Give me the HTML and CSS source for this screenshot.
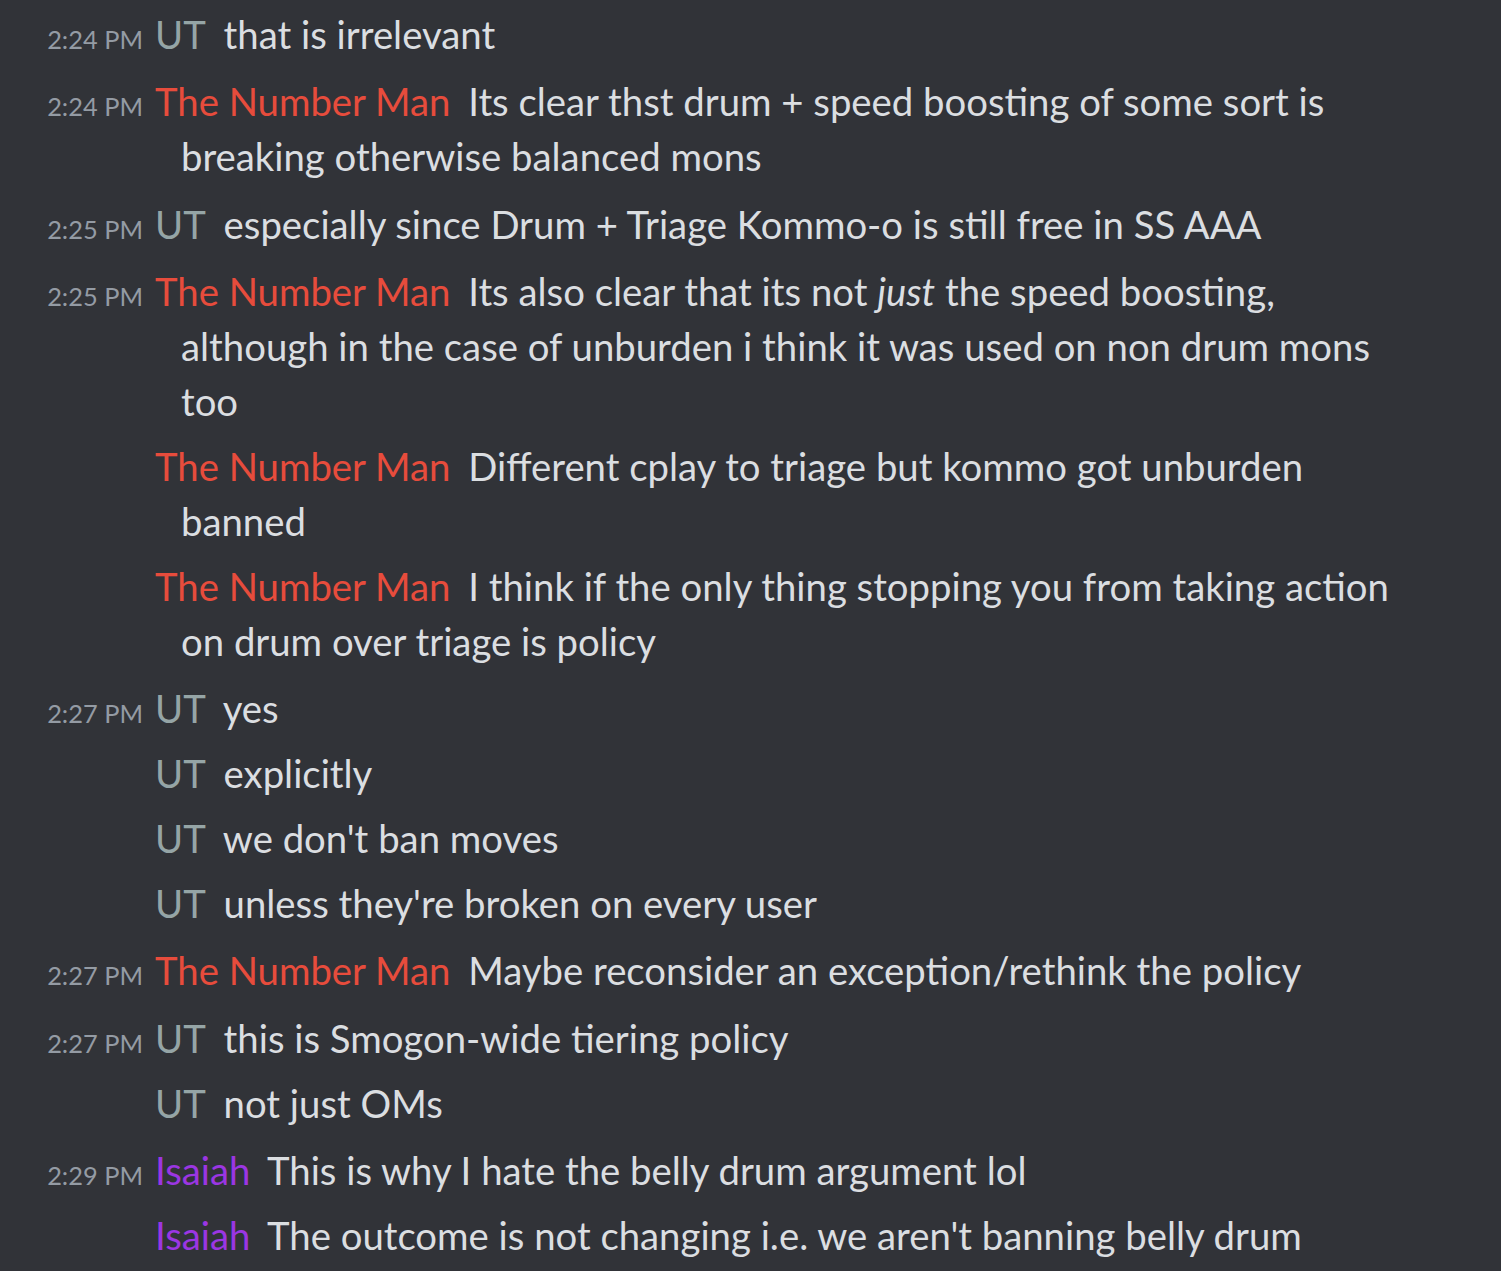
FILE: index.html
```html
<!DOCTYPE html>
<html lang="en">
<head>
<meta charset="utf-8">
<title>Chat</title>
<link rel="stylesheet" href="styles.css">
</head>
<body>
<main class="chat">
  <div class="msg start"><span class="ts">2:24 PM</span><span class="name ut">UT</span> that is irrelevant</div>
  <div class="msg start"><span class="ts">2:24 PM</span><span class="name tnm">The Number Man</span> Its clear thst drum + speed boosting of some sort is breaking otherwise balanced mons</div>
  <div class="msg start"><span class="ts">2:25 PM</span><span class="name ut">UT</span> especially since Drum + Triage Kommo-o is still free in SS AAA</div>
  <div class="msg start"><span class="ts">2:25 PM</span><span class="name tnm">The Number Man</span> Its also clear that its not <em>just</em> the speed boosting, although in the case of unburden i think it was used on non drum mons too</div>
  <div class="msg"><span class="ts"></span><span class="name tnm">The Number Man</span> Different cplay to triage but kommo got unburden banned</div>
  <div class="msg"><span class="ts"></span><span class="name tnm">The Number Man</span> I think if the only thing stopping you from taking action on drum over triage is policy</div>
  <div class="msg start"><span class="ts">2:27 PM</span><span class="name ut">UT</span> yes</div>
  <div class="msg"><span class="ts"></span><span class="name ut">UT</span> explicitly</div>
  <div class="msg"><span class="ts"></span><span class="name ut">UT</span> we don't ban moves</div>
  <div class="msg"><span class="ts"></span><span class="name ut">UT</span> unless they're broken on every user</div>
  <div class="msg start"><span class="ts">2:27 PM</span><span class="name tnm">The Number Man</span> Maybe reconsider an exception/rethink the policy</div>
  <div class="msg start"><span class="ts">2:27 PM</span><span class="name ut">UT</span> this is Smogon-wide tiering policy</div>
  <div class="msg"><span class="ts"></span><span class="name ut">UT</span> not just OMs</div>
  <div class="msg start"><span class="ts">2:29 PM</span><span class="name isa">Isaiah</span> This is why I hate the belly drum argument lol</div>
  <div class="msg"><span class="ts"></span><span class="name isa">Isaiah</span> The outcome is not changing i.e. we aren't banning belly drum</div>
</main>
</body>
</html>
```
FILE: styles.css
```css
html, body {
  margin: 0;
  padding: 0;
  background: #313338;
}
.chat {
  padding: 2px 86px 0 0;
  font-family: Lato, "Noto Sans", sans-serif;
  font-size: 38.3px;
  line-height: 55px;
  color: #dbdee1;
}
.msg {
  padding: 5px 0 5px 181px;
  text-indent: -138px;
}
.msg.start {
  margin-top: 2.3px;
}
.msg:first-child {
  margin-top: 0;
}
.ts {
  display: inline-block;
  width: 100px;
  margin-right: 12px;
  text-indent: 0;
  text-align: right;
  font-size: 25.4px;
  line-height: 30px;
  color: #949ba4;
}
.name {
  margin-right: 8px;
}
.ut { color: #95a5a6; }
.tnm { color: #e74c3c; }
.isa { color: #9b36e3; }
em { font-style: italic; }
```
